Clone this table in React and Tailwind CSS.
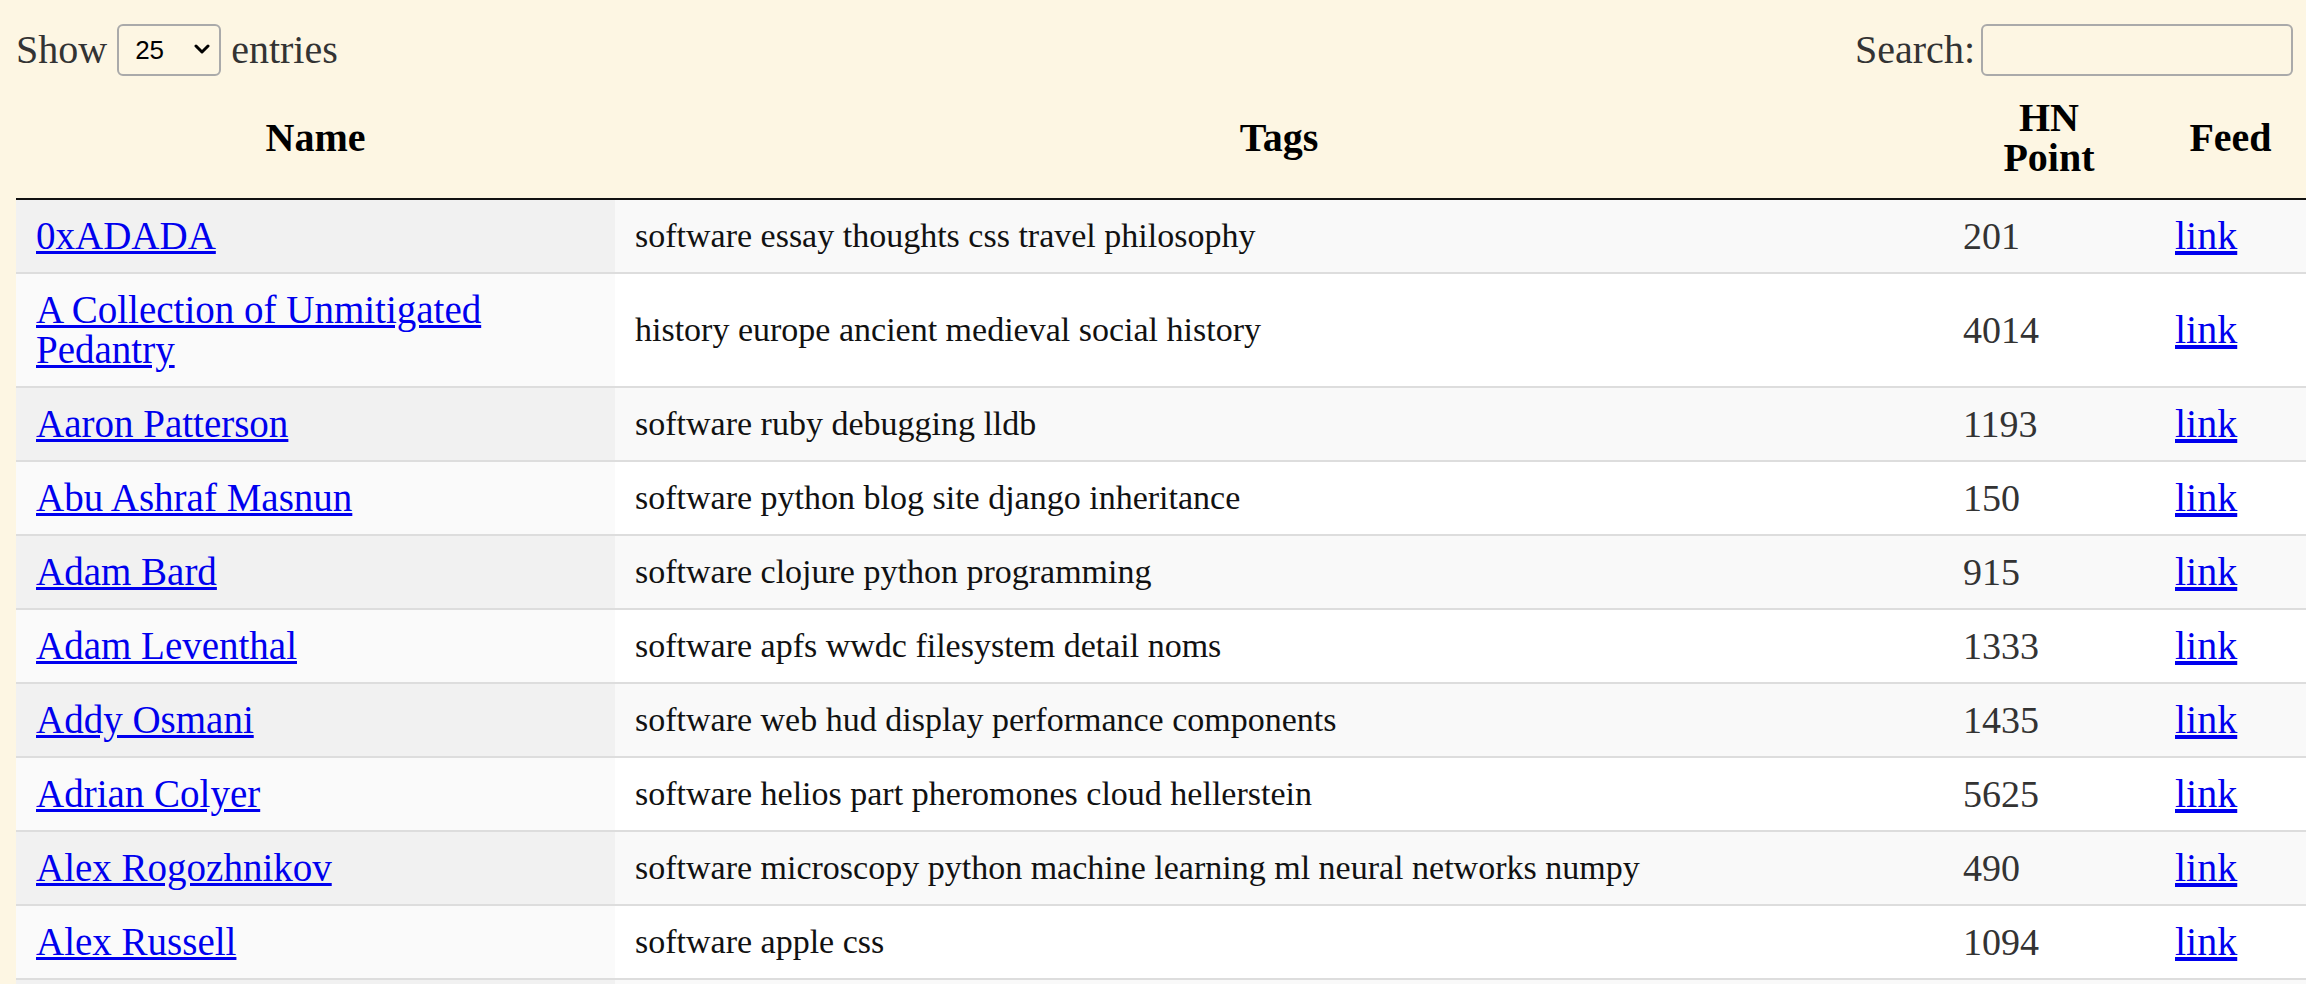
import { useState } from 'react'

const rows = [
  { name: '0xADADA', tags: 'software essay thoughts css travel philosophy', points: 201 },
  { name: 'A Collection of Unmitigated Pedantry', tags: 'history europe ancient medieval social history', points: 4014 },
  { name: 'Aaron Patterson', tags: 'software ruby debugging lldb', points: 1193 },
  { name: 'Abu Ashraf Masnun', tags: 'software python blog site django inheritance', points: 150 },
  { name: 'Adam Bard', tags: 'software clojure python programming', points: 915 },
  { name: 'Adam Leventhal', tags: 'software apfs wwdc filesystem detail noms', points: 1333 },
  { name: 'Addy Osmani', tags: 'software web hud display performance components', points: 1435 },
  { name: 'Adrian Colyer', tags: 'software helios part pheromones cloud hellerstein', points: 5625 },
  { name: 'Alex Rogozhnikov', tags: 'software microscopy python machine learning ml neural networks numpy', points: 490 },
  { name: 'Alex Russell', tags: 'software apple css', points: 1094 },
  { name: 'Alex Sexton', tags: 'software javascript web performance', points: 812 },
]

const App = () => {
  const [pageSize, setPageSize] = useState('25')
  const [query, setQuery] = useState('')

  return (
    <div className="min-h-screen bg-[#fdf6e3] pl-4 font-['Liberation_Serif',serif]">
      {/* controls */}
      <div className="flex items-center justify-between pt-6 pr-[13px] text-[40px] leading-[40px] text-[#333]">
        <label className="flex items-center gap-[10px]">
          <span>Show</span>
          <span className="relative block">
            <select
              value={pageSize}
              onChange={(e) => setPageSize(e.target.value)}
              className="block w-[104px] h-[52px] appearance-none rounded-[6px] border-2 border-[#aaa] bg-transparent pl-[16px] font-['Liberation_Sans',sans-serif] text-[26px] text-black outline-none"
            >
              <option>10</option>
              <option>25</option>
              <option>50</option>
              <option>100</option>
            </select>
            <svg
              className="pointer-events-none absolute right-[11px] top-[20px]"
              width="16"
              height="11"
              viewBox="0 0 16 11"
              fill="none"
            >
              <path d="M2 2l6 6 6-6" stroke="#000" strokeWidth="3" strokeLinecap="round" strokeLinejoin="round" />
            </svg>
          </span>
          <span>entries</span>
        </label>
        <label className="flex items-center gap-[6px]">
          <span>Search:</span>
          <input
            value={query}
            onChange={(e) => setQuery(e.target.value)}
            className="block w-[312px] h-[52px] rounded-[6px] border-2 border-[#aaa] bg-transparent px-2 text-[26px] outline-none"
          />
        </label>
      </div>

      {/* table */}
      <table className="mt-[2px] w-[2290px] table-fixed border-separate border-spacing-0">
        <colgroup>
          <col className="w-[599px]" />
          <col className="w-[1328px]" />
          <col className="w-[212px]" />
          <col className="w-[151px]" />
        </colgroup>
        <thead>
          <tr className="text-[40px] leading-[40px] font-bold text-black">
            <th className="border-b-2 border-[#111] px-[18px] py-5 text-center align-middle">Name</th>
            <th className="border-b-2 border-[#111] px-[18px] py-5 text-center align-middle">Tags</th>
            <th className="border-b-2 border-[#111] px-[18px] py-5 text-center align-middle">HN<br />Point</th>
            <th className="border-b-2 border-[#111] px-[18px] py-5 text-center align-middle">Feed</th>
          </tr>
        </thead>
        <tbody>
          {rows.map((r, i) => {
            const odd = i % 2 === 0
            const border = i > 0 ? 'border-t-2 border-[#ddd]' : ''
            return (
              <tr key={r.name} className={odd ? 'bg-[#f9f9f9]' : 'bg-white'}>
                <td className={`${border} ${odd ? 'bg-[#f1f1f1]' : 'bg-[#fafafa]'} px-5 py-4 align-middle text-[39px] leading-[40px]`}>
                  <a href="#" className="text-[#0000ee] underline">{r.name}</a>
                </td>
                <td className={`${border} px-5 py-4 align-middle text-[34px] leading-[40px] text-[#111]`}>{r.tags}</td>
                <td className={`${border} px-5 py-4 align-middle text-[38px] leading-[40px] text-[#333]`}>{r.points}</td>
                <td className={`${border} px-5 py-4 align-middle text-[40px] leading-[40px]`}>
                  <a href="#" className="text-[#0000ee] underline">link</a>
                </td>
              </tr>
            )
          })}
        </tbody>
      </table>
    </div>
  )
}

export default App
